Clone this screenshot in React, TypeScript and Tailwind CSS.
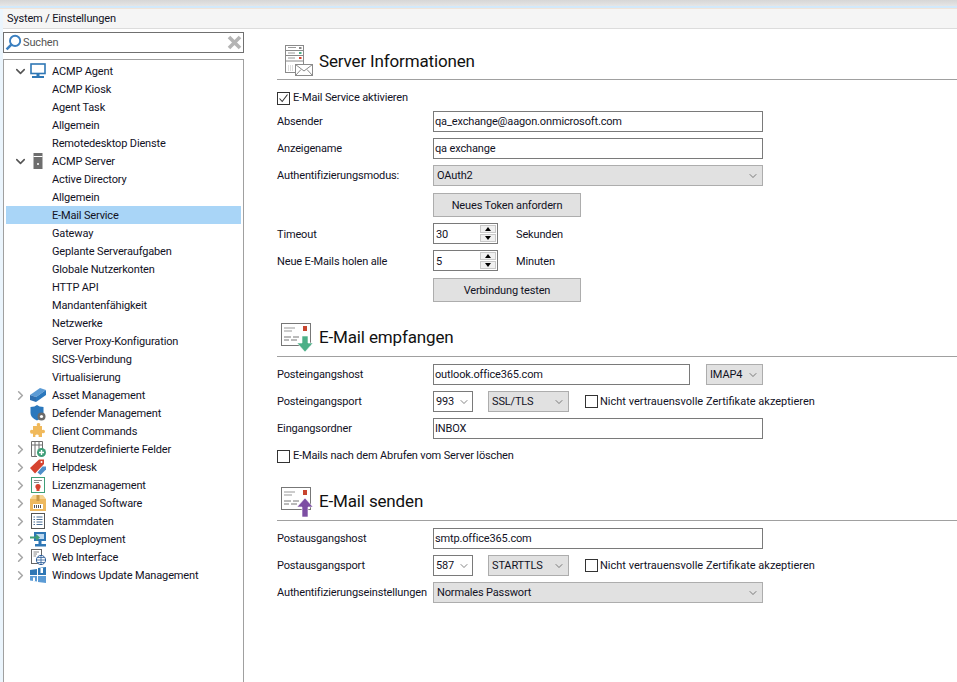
import { ChevronDown, ChevronRight } from 'lucide-react';
import React from 'react';

const font = "font-['Roboto','Noto_Sans',sans-serif]";

// ---- tree icons ----
function MonitorIcon() {
  return (
    <svg width="16" height="16" viewBox="0 0 16 16">
      <rect x="1" y="1" width="14" height="9.5" fill="#fff" stroke="#2f77b5" strokeWidth="1.6" />
      <rect x="6.5" y="11" width="3" height="2" fill="#2f77b5" />
      <rect x="2" y="13" width="12" height="2" fill="#2f77b5" />
    </svg>
  );
}
function ServerIcon() {
  return (
    <svg width="16" height="16" viewBox="0 0 16 16">
      <rect x="3.5" y="0" width="9" height="16" fill="#6e6e6e" />
      <rect x="3.5" y="3" width="9" height="1" fill="#fff" />
      <rect x="7" y="10" width="2" height="2" fill="#ddd" />
    </svg>
  );
}
function AssetIcon() {
  return (
    <svg width="16" height="16" viewBox="0 0 16 16">
      <path d="M0 8 L10 1 L16 3 L6 10 Z" fill="#5b9bd5" />
      <path d="M0 8 L6 10 L6 15 L0 13 Z" fill="#2f6fb0" />
      <path d="M6 10 L16 3 L16 8 L6 15 Z" fill="#2b78bd" />
    </svg>
  );
}
function ShieldIcon() {
  return (
    <svg width="16" height="16" viewBox="0 0 16 16">
      <path d="M0.5 2 Q5 2 7 0 Q9 2 13.5 2 V8 Q13.5 13 7 15.5 Q0.5 13 0.5 8 Z" fill="#2b78bd" />
      <circle cx="11.5" cy="11.5" r="4" fill="#6b6b6b" />
      <circle cx="11.5" cy="11.5" r="1.6" fill="#fff" />
    </svg>
  );
}
function PuzzleIcon() {
  return (
    <svg width="16" height="16" viewBox="0 0 16 16">
      <path
        d="M5 3 H7 Q6 0 8.5 0 Q11 0 10 3 H12 V7 Q15 6 15 8.5 Q15 11 12 10 V14 H8.5 Q9.5 11.5 7 11.5 Q4.5 11.5 5.5 14 H3 V10.5 Q0 11.5 0 8.5 Q0 6 3 7 V3 Z"
        fill="#f0b95b"
      />
    </svg>
  );
}
function TableIcon() {
  return (
    <svg width="16" height="16" viewBox="0 0 16 16">
      <path d="M1.5 .5 H12.5 V8 M1.5 .5 V15.5 H7 M5 .5 V15.5 M9 .5 V8 M1.5 4 H12.5" fill="none" stroke="#6e6e6e" />
      <circle cx="11.5" cy="11.5" r="4.5" fill="#3f9e78" />
      <path d="M9 11.5 H14 M11.5 9 V14" stroke="#fff" strokeWidth="1.4" />
    </svg>
  );
}
function TagIcon() {
  return (
    <svg width="16" height="16" viewBox="0 0 16 16">
      <path d="M0 9 L9 0.5 L14 0.5 L14 5 L5 14.5 Z" fill="#d6432f" />
      <path d="M7.5 13.5 L12.5 7.5 L16 7.5 L16 10.5 L10.5 16 Z" fill="#4f8fca" />
      <circle cx="11.5" cy="3" r="1" fill="#fff" />
    </svg>
  );
}
function LicenseIcon() {
  return (
    <svg width="16" height="16" viewBox="0 0 16 16">
      <rect x="1.5" y=".5" width="13" height="15" fill="#fff" stroke="#3f9e78" />
      <path d="M4 3.5 H12 M4 5.5 H9" stroke="#8a8a8a" />
      <circle cx="8" cy="9.5" r="2.6" fill="#d6432f" />
      <path d="M6.5 11 V14 H9.5 V11 Z" fill="#d6432f" />
    </svg>
  );
}
function BoxIcon() {
  return (
    <svg width="16" height="16" viewBox="0 0 16 16">
      <path d="M0 4 L3 0 H13 L16 4 Z" fill="#f5d28f" />
      <rect x="0" y="4" width="16" height="12" fill="#eeb95e" />
      <rect x="6.5" y="0" width="3" height="6" fill="#c99a4a" />
      <rect x="3" y="9" width="10" height="5" fill="#fff" />
      <path d="M4.5 10 V13 M6.5 10 V13 M8.5 10 V13 M10.5 10 V13" stroke="#555" />
    </svg>
  );
}
function ListIcon() {
  return (
    <svg width="16" height="16" viewBox="0 0 16 16">
      <rect x="1.5" y=".5" width="13" height="15" fill="#fff" stroke="#555" />
      <path d="M3.5 4 H5 M6.5 4 H12.5 M3.5 6.5 H5 M6.5 6.5 H12.5 M3.5 9 H5 M6.5 9 H12.5 M3.5 11.5 H5 M6.5 11.5 H12.5" stroke="#4a6f96" />
    </svg>
  );
}
function DeployIcon() {
  return (
    <svg width="16" height="16" viewBox="0 0 16 16">
      <rect x="4" y="1" width="12" height="9" fill="#2f77b5" />
      <rect x="6" y="3" width="8" height="5" fill="#bcd8ef" />
      <rect x="8.5" y="10" width="3" height="3" fill="#2f77b5" />
      <rect x="5" y="13" width="11" height="2.5" fill="#2f77b5" />
      <path d="M0 5.5 H6 V3 L10 6.5 L6 10 V7.5 H0 Z" fill="#3f9e78" />
    </svg>
  );
}
function WebIcon() {
  return (
    <svg width="16" height="16" viewBox="0 0 16 16">
      <rect x="1.5" y=".5" width="10" height="14" fill="#fff" stroke="#666" />
      <path d="M3.5 3 H9 M3.5 5 H7 M3.5 7 H6" stroke="#888" />
      <circle cx="11" cy="11" r="4.6" fill="#fff" stroke="#2f5f9b" />
      <path d="M6.5 11 H15.5 M11 6.5 V15.5 M7.5 8.5 H14.5 M7.5 13.5 H14.5" stroke="#2f5f9b" strokeWidth=".8" />
    </svg>
  );
}
function WindowsIcon() {
  return (
    <svg width="16" height="16" viewBox="0 0 16 16">
      <path d="M0 3 L7 2 V8 H0 Z M8 1 L16 0 V8 H8 Z" fill="#2f77b5" />
      <path d="M0 9 H7 V14.5 L0 13.5 Z M8 9 H16 V16 L8 15 Z" fill="#5b9bd5" />
      <rect x="10.5" y="1" width="2.5" height="5" fill="#fff" />
      <rect x="3" y="10.5" width="2" height="3.5" fill="#fff" />
    </svg>
  );
}

// ---- header icons ----
function ServerMailIcon() {
  return (
    <svg width="29" height="32" viewBox="0 0 29 32">
      <rect x=".5" y="1.5" width="18" height="27" fill="#fff" stroke="#8a8a8a" />
      <path d="M.5 6.5 H18.5 M.5 11.5 H18.5 M.5 17 H18.5" stroke="#8a8a8a" />
      <path d="M3 3.5 H11 M3 9 H10 M3 14 H10" stroke="#999" />
      <rect x="14" y="3" width="2.5" height="2" fill="#888" />
      <rect x="14" y="8" width="2.5" height="2" fill="#4caf87" />
      <rect x="14" y="13" width="2.5" height="2" fill="#d6432f" />
      <path d="M3 22 H8 M3 24 H8 M3 26 H8" stroke="#bbb" strokeDasharray="1 1" />
      <rect x="10.5" y="20.5" width="17" height="11" fill="#fff" stroke="#8a8a8a" />
      <path d="M10.5 20.5 L19 27 L27.5 20.5 M10.5 31.5 L16 25.5 M27.5 31.5 L22 25.5" fill="none" stroke="#8a8a8a" />
    </svg>
  );
}
function MailArrowIcon({ color, up }: { color: string; up?: boolean }) {
  return (
    <svg width="33" height="31" viewBox="0 0 33 31">
      <rect x=".5" y="1.5" width="29" height="22" fill="#fff" stroke="#777" />
      <path d="M3 6 H14 M3 9 H11" stroke="#999" />
      <path d="M3 15 H10 M12 15 H18 M3 18 H8 M10 18 H16" stroke="#777" />
      <rect x="22" y="4" width="4" height="5" fill="#c8452f" />
      {up ? (
        <path d="M16 21 L24 12 L32 21 H27 V31 H21 V21 Z" fill={color} stroke="#fff" strokeWidth=".6" />
      ) : (
        <path d="M21 14 H27 V21 H32 L24 30 L16 21 H21 Z" fill={color} stroke="#fff" strokeWidth=".6" />
      )}
    </svg>
  );
}

// ---- tree ----
type TreeItem = { label: string; icon?: React.ReactNode; arrow?: 'down' | 'right'; selected?: boolean };

const treeItems: TreeItem[] = [
  { label: 'ACMP Agent', icon: <MonitorIcon />, arrow: 'down' },
  { label: 'ACMP Kiosk' },
  { label: 'Agent Task' },
  { label: 'Allgemein' },
  { label: 'Remotedesktop Dienste' },
  { label: 'ACMP Server', icon: <ServerIcon />, arrow: 'down' },
  { label: 'Active Directory' },
  { label: 'Allgemein' },
  { label: 'E-Mail Service', selected: true },
  { label: 'Gateway' },
  { label: 'Geplante Serveraufgaben' },
  { label: 'Globale Nutzerkonten' },
  { label: 'HTTP API' },
  { label: 'Mandantenfähigkeit' },
  { label: 'Netzwerke' },
  { label: 'Server Proxy-Konfiguration' },
  { label: 'SICS-Verbindung' },
  { label: 'Virtualisierung' },
  { label: 'Asset Management', icon: <AssetIcon />, arrow: 'right' },
  { label: 'Defender Management', icon: <ShieldIcon /> },
  { label: 'Client Commands', icon: <PuzzleIcon /> },
  { label: 'Benutzerdefinierte Felder', icon: <TableIcon />, arrow: 'right' },
  { label: 'Helpdesk', icon: <TagIcon />, arrow: 'right' },
  { label: 'Lizenzmanagement', icon: <LicenseIcon />, arrow: 'right' },
  { label: 'Managed Software', icon: <BoxIcon />, arrow: 'right' },
  { label: 'Stammdaten', icon: <ListIcon />, arrow: 'right' },
  { label: 'OS Deployment', icon: <DeployIcon />, arrow: 'right' },
  { label: 'Web Interface', icon: <WebIcon />, arrow: 'right' },
  { label: 'Windows Update Management', icon: <WindowsIcon />, arrow: 'right' },
];

function TreeRow({ item }: { item: TreeItem }) {
  return (
    <div className={`flex h-[18px] items-center ${item.selected ? 'bg-[#a9d5f7]' : ''}`}>
      <div className="ml-[9px] flex w-[10px] items-center justify-center">
        {item.arrow === 'down' && <ChevronDown size={15} strokeWidth={2.5} className="shrink-0 text-[#555]" />}
        {item.arrow === 'right' && <ChevronRight size={15} strokeWidth={2.5} className="shrink-0 text-[#a6a6a6]" />}
      </div>
      <div className="ml-[5px] flex w-[16px] items-center justify-center">{item.icon}</div>
      <span className="ml-[6px] whitespace-nowrap pt-[2px]">{item.label}</span>
    </div>
  );
}

// ---- form pieces ----
function Label({ children, low }: { children: React.ReactNode; low?: boolean }) {
  return <div className={`w-[156px] shrink-0 whitespace-nowrap ${low ? 'pt-[2px]' : ''}`}>{children}</div>;
}

function TextBox({ value, className = 'w-[330px]' }: { value: string; className?: string }) {
  return (
    <div className={`flex h-[21px] items-center border border-[#7a7a7a] bg-white pl-[1px] ${className}`}>{value}</div>
  );
}

function Arrow() {
  return <ChevronDown size={12} strokeWidth={1.2} className="shrink-0 text-[#333]" />;
}

function GraySelect({ value, className }: { value: string; className: string }) {
  return (
    <div className={`flex h-[21px] items-center justify-between border border-[#adadad] bg-[#e1e1e1] pl-[3px] pr-[3px] ${className}`}>
      <span>{value}</span>
      <Arrow />
    </div>
  );
}

function PortSelect({ value }: { value: string }) {
  return (
    <div className="flex h-[21px] w-[40px] items-center justify-between border border-[#7a7a7a] bg-white pl-[2px] pr-[2px]">
      <span>{value}</span>
      <Arrow />
    </div>
  );
}

function GrayButton({ children }: { children: React.ReactNode }) {
  return (
    <div className="flex h-[24px] w-[148px] items-center justify-center border border-[#adadad] bg-[#e1e1e1] pt-[2px]">
      {children}
    </div>
  );
}

function Spin({ value }: { value: string }) {
  return (
    <div className="flex h-[21px] w-[65px] items-center justify-between border border-[#7a7a7a] bg-white pl-[2px] pr-[1px]">
      <span className="pt-[2px]">{value}</span>
      <div className="flex flex-col gap-[1px]">
        <div className="flex h-[8px] w-[16px] items-center justify-center border border-[#c8c8c8] bg-[#f0f0f0]">
          <div className="h-0 w-0 border-x-[3px] border-b-[4px] border-x-transparent border-b-black" />
        </div>
        <div className="flex h-[8px] w-[16px] items-center justify-center border border-[#c8c8c8] bg-[#f0f0f0]">
          <div className="h-0 w-0 border-x-[3px] border-t-[4px] border-x-transparent border-t-black" />
        </div>
      </div>
    </div>
  );
}

function CheckBox({ checked, label, gap = 'ml-[3px]' }: { checked?: boolean; label: string; gap?: string }) {
  return (
    <div className="flex items-center whitespace-nowrap">
      <div className="flex h-[13px] w-[13px] items-center justify-center border border-[#333] bg-white">
        {checked && (
          <svg width="11" height="11" viewBox="0 0 11 11">
            <path d="M1.5 5.5 L4.2 8.5 L9.5 1.5" fill="none" stroke="#333" strokeWidth="1.1" />
          </svg>
        )}
      </div>
      <span className={gap}>{label}</span>
    </div>
  );
}

function Section({ icon, title, iconClass, height, titleClass }: { icon: React.ReactNode; title: string; iconClass: string; height: string; titleClass: string }) {
  return (
    <div className={`flex items-end border-b border-[#a0a0a0] ${height}`}>
      <div className={`flex ${iconClass}`}>{icon}</div>
      <h2 className={`text-[17px] leading-[22px] font-normal tracking-[-0.15px] text-[#111] ${titleClass}`}>{title}</h2>
    </div>
  );
}

export default function App() {
  return (
    <div className={`flex h-[682px] w-[957px] flex-col overflow-hidden bg-white text-[11px] leading-[14px] tracking-[-0.15px] text-[#12121f] ${font}`}>
      {/* window strip */}
      <div className="h-[6px] shrink-0 bg-gradient-to-b from-[#d6d6d6] to-[#e6e6e6]" />
      <div className="h-[3px] shrink-0 border-b border-[#f0e4d8] bg-[#d2e9fb]" />
      <div className="flex min-h-0 flex-1">
        <div className="w-[3px] shrink-0 bg-[#ebf5fd]" />
        <div className="flex min-w-0 flex-1 flex-col">
          <div className="flex h-[20px] shrink-0 items-center border-b border-[#dcdcdc] bg-[#f5f5f5] pl-[4px]">
            System / Einstellungen
          </div>
          <div className="flex min-h-0 flex-1">
            {/* left panel */}
            <div className="flex w-[241px] shrink-0 flex-col pt-[3px]">
              <div className="flex h-[21px] items-center border border-[#707070] bg-white pl-[1px] pr-[1px]">
                <svg width="17" height="17" viewBox="0 0 16 16">
                  <circle cx="9.5" cy="6.5" r="4.8" fill="none" stroke="#3a7fc0" strokeWidth="1.8" />
                  <path d="M6 10 L1.5 14.5" stroke="#3a7fc0" strokeWidth="2.4" />
                </svg>
                <span className="ml-[1px] flex-1 pt-[1px] text-[#555]">Suchen</span>
                <svg width="15" height="15" viewBox="0 0 15 15">
                  <path d="M2 2 L13 13 M13 2 L2 13" stroke="#b4b4b4" strokeWidth="3.6" />
                </svg>
              </div>
              <div className="mt-[6px] flex-1 border-x border-t border-[#a0a0a0] bg-white px-[2px] pt-[2px]">
                {treeItems.map((item, i) => (
                  <TreeRow key={i} item={item} />
                ))}
              </div>
            </div>

            {/* right panel */}
            <div className="ml-[33px] flex-1">
              <Section icon={<ServerMailIcon />} title="Server Informationen" iconClass="ml-[8px] mr-[5px] mb-[3px]" height="h-[51px]" titleClass="mb-[7px]" />
              <div className="mt-[10px] pt-[1px]"><CheckBox checked label="E-Mail Service aktivieren" /></div>
              <div className="mt-[6px] flex items-center"><Label>Absender</Label><TextBox value="qa_exchange@aagon.onmicrosoft.com" /></div>
              <div className="mt-[6px] flex items-center"><Label>Anzeigename</Label><TextBox value="qa exchange" /></div>
              <div className="mt-[6px] flex items-center"><Label>Authentifizierungsmodus:</Label><GraySelect value="OAuth2" className="w-[330px]" /></div>
              <div className="mt-[7px] ml-[156px]"><GrayButton>Neues Token anfordern</GrayButton></div>
              <div className="mt-[6px] flex items-center"><Label low>Timeout</Label><Spin value="30" /><span className="ml-[18px] pt-[2px]">Sekunden</span></div>
              <div className="mt-[6px] flex items-center"><Label low>Neue E-Mails holen alle</Label><Spin value="5" /><span className="ml-[18px] pt-[2px]">Minuten</span></div>
              <div className="mt-[7px] ml-[156px]"><GrayButton>Verbindung testen</GrayButton></div>

              <Section icon={<MailArrowIcon color="#4caf87" />} title="E-Mail empfangen" iconClass="ml-[4px] mr-[5px] mb-[3px]" height="h-[55px]" titleClass="mb-[8px]" />
              <div className="mt-[7px] flex items-center">
                <Label>Posteingangshost</Label>
                <TextBox value="outlook.office365.com" className="w-[257px]" />
                <GraySelect value="IMAP4" className="ml-[16px] w-[57px]" />
              </div>
              <div className="mt-[6px] flex items-center">
                <Label>Posteingangsport</Label>
                <PortSelect value="993" />
                <GraySelect value="SSL/TLS" className="ml-[15px] w-[81px]" />
                <div className="ml-[16px] tracking-normal"><CheckBox gap="ml-[2px]" label="Nicht vertrauensvolle Zertifikate akzeptieren" /></div>
              </div>
              <div className="mt-[6px] flex items-center"><Label>Eingangsordner</Label><TextBox value="INBOX" /></div>
              <div className="mt-[10px]"><CheckBox label="E-Mails nach dem Abrufen vom Server löschen" /></div>

              <Section icon={<MailArrowIcon color="#7d4ea3" up />} title="E-Mail senden" iconClass="ml-[4px] mr-[5px] mb-[3px]" height="h-[58px]" titleClass="mb-[8px]" />
              <div className="mt-[7px] flex items-center"><Label>Postausgangshost</Label><TextBox value="smtp.office365.com" /></div>
              <div className="mt-[6px] flex items-center">
                <Label>Postausgangsport</Label>
                <PortSelect value="587" />
                <GraySelect value="STARTTLS" className="ml-[15px] w-[81px]" />
                <div className="ml-[16px] tracking-normal"><CheckBox gap="ml-[2px]" label="Nicht vertrauensvolle Zertifikate akzeptieren" /></div>
              </div>
              <div className="mt-[6px] flex items-center">
                <Label>Authentifizierungseinstellungen</Label>
                <GraySelect value="Normales Passwort" className="w-[330px]" />
              </div>
            </div>
          </div>
        </div>
      </div>
    </div>
  );
}
